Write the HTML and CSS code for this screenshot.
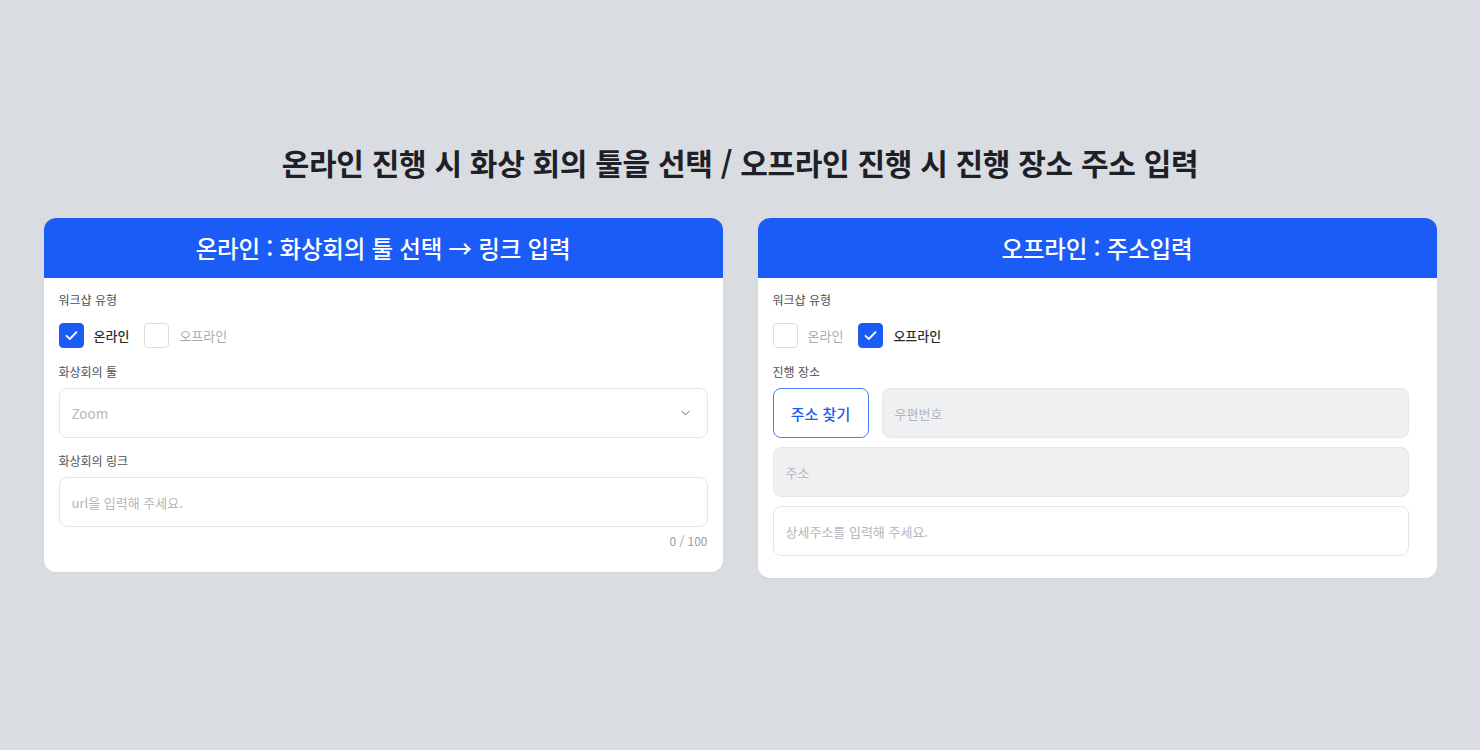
FILE: index.html
```html
<!DOCTYPE html>
<html lang="ko">
<head>
<meta charset="utf-8">
<link rel="stylesheet" href="styles.css">
</head>
<body>
<main class="page">
  <h1 class="title">온라인 진행 시 화상 회의 툴을 선택 / 오프라인 진행 시 진행 장소 주소 입력</h1>
  <div class="cards">
    <section class="card card-online">
      <header class="card-head">온라인 : 화상회의 툴 선택 → 링크 입력</header>
      <div class="card-body">
        <div class="label">워크샵 유형</div>
        <div class="checks">
          <label class="check on"><span class="box"><svg viewBox="0 0 25 25" width="25" height="25"><path d="M7.5 12.8l3.3 3.2 6.7-6.8" fill="none" stroke="#fff" stroke-width="1.8" stroke-linecap="round" stroke-linejoin="round"/></svg></span><span class="check-text">온라인</span></label>
          <label class="check"><span class="box"></span><span class="check-text">오프라인</span></label>
        </div>
        <div class="label mt">화상회의 툴</div>
        <div class="field select">
          <span class="ph ph-zoom">Zoom</span>
          <svg class="chev" viewBox="0 0 10 6" width="9" height="6"><path d="M1 1l4 4 4-4" fill="none" stroke="#9a9da3" stroke-width="1.2" stroke-linecap="round" stroke-linejoin="round"/></svg>
        </div>
        <div class="label mt2">화상회의 링크</div>
        <div class="field"><span class="ph">url을 입력해 주세요.</span></div>
        <div class="counter">0 / 100</div>
      </div>
    </section>
    <section class="card card-offline">
      <header class="card-head">오프라인 : 주소입력</header>
      <div class="card-body">
        <div class="label">워크샵 유형</div>
        <div class="checks">
          <label class="check"><span class="box"></span><span class="check-text">온라인</span></label>
          <label class="check on"><span class="box"><svg viewBox="0 0 25 25" width="25" height="25"><path d="M7.5 12.8l3.3 3.2 6.7-6.8" fill="none" stroke="#fff" stroke-width="1.8" stroke-linecap="round" stroke-linejoin="round"/></svg></span><span class="check-text">오프라인</span></label>
        </div>
        <div class="label mt">진행 장소</div>
        <div class="addr-row">
          <button class="find-btn">주소 찾기</button>
          <div class="field disabled grow"><span class="ph">우편번호</span></div>
        </div>
        <div class="field disabled gap10"><span class="ph">주소</span></div>
        <div class="field gap10"><span class="ph">상세주소를 입력해 주세요.</span></div>
      </div>
    </section>
  </div>
</main>
</body>
</html>
```

FILE: styles.css
```css
* { box-sizing: border-box; }
html, body { margin: 0; padding: 0; }
body {
  background: #d9dce0;
  font-family: "Noto Sans CJK KR", "Noto Sans", sans-serif;
  width: 1480px;
  height: 750px;
  overflow: hidden;
}
.page {
  display: flex;
  flex-direction: column;
  align-items: center;
  padding-top: 140px;
}
.title {
  margin: 0;
  font-size: 30px;
  line-height: 44px;
  font-weight: 700;
  color: #1d2127;
  letter-spacing: -0.3px;
}
.cards {
  display: flex;
  gap: 35px;
  margin-top: 34px;
  align-items: flex-start;
}
.card {
  width: 679px;
  background: #fff;
  border-radius: 12px;
  overflow: hidden;
  box-shadow: 0 1px 3px rgba(0,0,0,0.04);
}
.card-head {
  height: 60px;
  background: #1b5cf6;
  color: #fff;
  font-size: 23.5px;
  font-weight: 500;
  display: flex;
  align-items: center;
  justify-content: center;
  letter-spacing: -0.2px;
}
.card-body {
  padding: 13px 15px 23px;
  display: flex;
  flex-direction: column;
}
.card-offline .card-body { padding: 13px 28px 22px 15px; }
.label {
  font-size: 12px;
  line-height: 18px;
  color: #4b4f56;
}
.label.mt { margin-top: 15px; }
.label.mt2 { margin-top: 14px; }
.checks {
  display: flex;
  gap: 15px;
  margin-top: 14px;
  height: 25px;
}
.check {
  display: flex;
  align-items: center;
  gap: 10px;
}
.box {
  width: 25px;
  height: 25px;
  border-radius: 4px;
  border: 1px solid #dcdee2;
  background: #fff;
  display: block;
}
.check.on .box {
  background: #1b5cf6;
  border-color: #1b5cf6;
}
.box svg { display: block; margin: -1px; }
.check-text {
  font-size: 13px;
  color: #a7abb1;
}
.check.on .check-text {
  color: #2a2e34;
  font-weight: 500;
}
.field {
  height: 50px;
  border: 1px solid #e3e5e8;
  border-radius: 8px;
  background: #fff;
  display: flex;
  align-items: center;
  padding: 0 12px;
  margin-top: 7px;
}
.field.disabled {
  background: #eff0f2;
  border-color: #e6e7ea;
}
.select { justify-content: space-between; padding-right: 17px; }
.ph {
  font-size: 13px;
  color: #b3b6bb;
}
.ph-zoom { font-size: 13.5px; }
.counter {
  margin-top: 6px;
  font-size: 12px;
  line-height: 16px;
  color: #9a9ea4;
  text-align: right;
}
.addr-row {
  display: flex;
  gap: 13px;
  margin-top: 7px;
}
.addr-row .field { margin-top: 0; }
.grow { flex: 1; }
.find-btn {
  width: 96px;
  height: 50px;
  border: 1.5px solid #4a7bf2;
  border-radius: 8px;
  background: #fff;
  color: #1b5cf6;
  font-family: inherit;
  font-size: 15px;
  font-weight: 500;
  padding: 0;
}
.field.gap10 { margin-top: 9px; }
```
